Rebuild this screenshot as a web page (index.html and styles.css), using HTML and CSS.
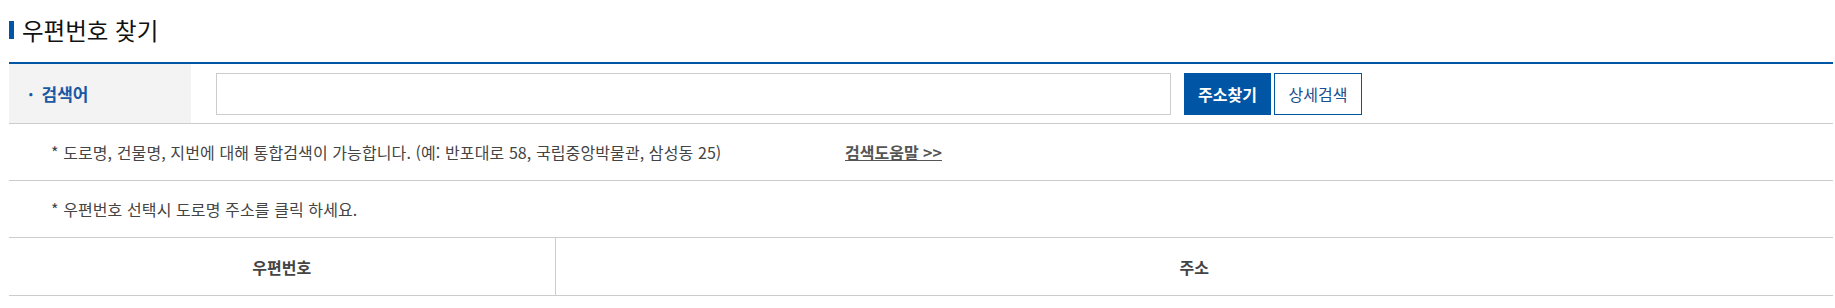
FILE: index.html
```html
<!DOCTYPE html>
<html lang="ko">
<head>
  <meta charset="UTF-8" />
  <title>우편번호 찾기</title>
  <link rel="stylesheet" href="styles.css">
</head>
<body>

<div class="wrap">
  <h2 class="title">우편번호 찾기</h2>

  <div class="search-box">
    <div class="search-row">
      <div class="label"><span class="dot">·</span>검색어</div>
      <div class="field">
        <input type="text" class="keyword">
        <button class="btn btn-blue">주소찾기</button>
        <button class="btn btn-line">상세검색</button>
      </div>
    </div>
    <div class="info-row">
      <span class="info-text">* 도로명, 건물명, 지번에 대해 통합검색이 가능합니다. (예: 반포대로 58, 국립중앙박물관, 삼성동 25)</span>
      <a href="#" class="help">검색도움말 &gt;&gt;</a>
    </div>
    <div class="info-row">
      <span class="info-text">* 우편번호 선택시 도로명 주소를 클릭 하세요.</span>
    </div>
  </div>

  <table class="result">
    <colgroup>
      <col class="col-zip">
      <col>
    </colgroup>
    <thead>
      <tr>
        <th>우편번호</th>
        <th>주소</th>
      </tr>
    </thead>
  </table>
</div>

</body>
</html>
```

FILE: styles.css
```css
body {
  margin: 0;
  padding: 0;
  background: #fff;
  color: #444;
  font-family: "Noto Sans CJK KR", "Noto Sans", sans-serif;
}
.wrap {
  padding: 0 2px 0 9px;
}
.title {
  margin: 0;
  height: 62px;
  display: flex;
  align-items: center;
  gap: 8px;
  font-size: 23.5px;
  font-weight: normal;
  color: #111;
  padding-bottom: 2px;
  box-sizing: border-box;
}
.title::before {
  content: "";
  width: 5px;
  height: 18px;
  background: #0055a5;
}
.search-box {
  border-top: 2px solid #0055a5;
}
.search-row {
  display: flex;
  border-bottom: 1px solid #ccc;
  height: 59px;
}
.label {
  width: 182px;
  background: #f3f3f3;
  color: #1a58a3;
  font-weight: bold;
  font-size: 17px;
  display: flex;
  align-items: center;
  padding-left: 19px;
  box-sizing: border-box;
}
.dot {
  margin-right: 8px;
}
.field {
  display: flex;
  align-items: center;
  padding-left: 25px;
}
.keyword {
  width: 955px;
  height: 42px;
  box-sizing: border-box;
  border: 1px solid #ccc;
  margin: 0 13px 0 0;
  padding: 0 10px;
  font-size: 16px;
}
.btn {
  height: 42px;
  font-family: inherit;
  font-size: 16px;
  box-sizing: border-box;
  cursor: pointer;
  padding: 0;
}
.btn-blue {
  width: 87px;
  background: #0055a5;
  color: #fff;
  border: none;
  font-weight: bold;
  margin-right: 3px;
}
.btn-line {
  width: 88px;
  background: #fff;
  color: #1a4f8f;
  border: 1px solid #0055a5;
}
.info-row {
  display: flex;
  align-items: center;
  height: 57px;
  box-sizing: border-box;
  border-bottom: 1px solid #ccc;
  padding-left: 42px;
  font-size: 16px;
  color: #444;
}
.info-text {
  width: 794px;
  letter-spacing: 0.1px;
}
.help {
  color: #555;
  font-weight: bold;
  text-decoration: underline;
}
.result {
  width: 100%;
  border-collapse: collapse;
}
.col-zip {
  width: 546px;
}
.result th {
  height: 57px;
  padding: 0;
  border-bottom: 1px solid #ccc;
  font-size: 16px;
  color: #444;
  font-weight: bold;
}
.result th + th {
  border-left: 1px solid #ccc;
}
```
